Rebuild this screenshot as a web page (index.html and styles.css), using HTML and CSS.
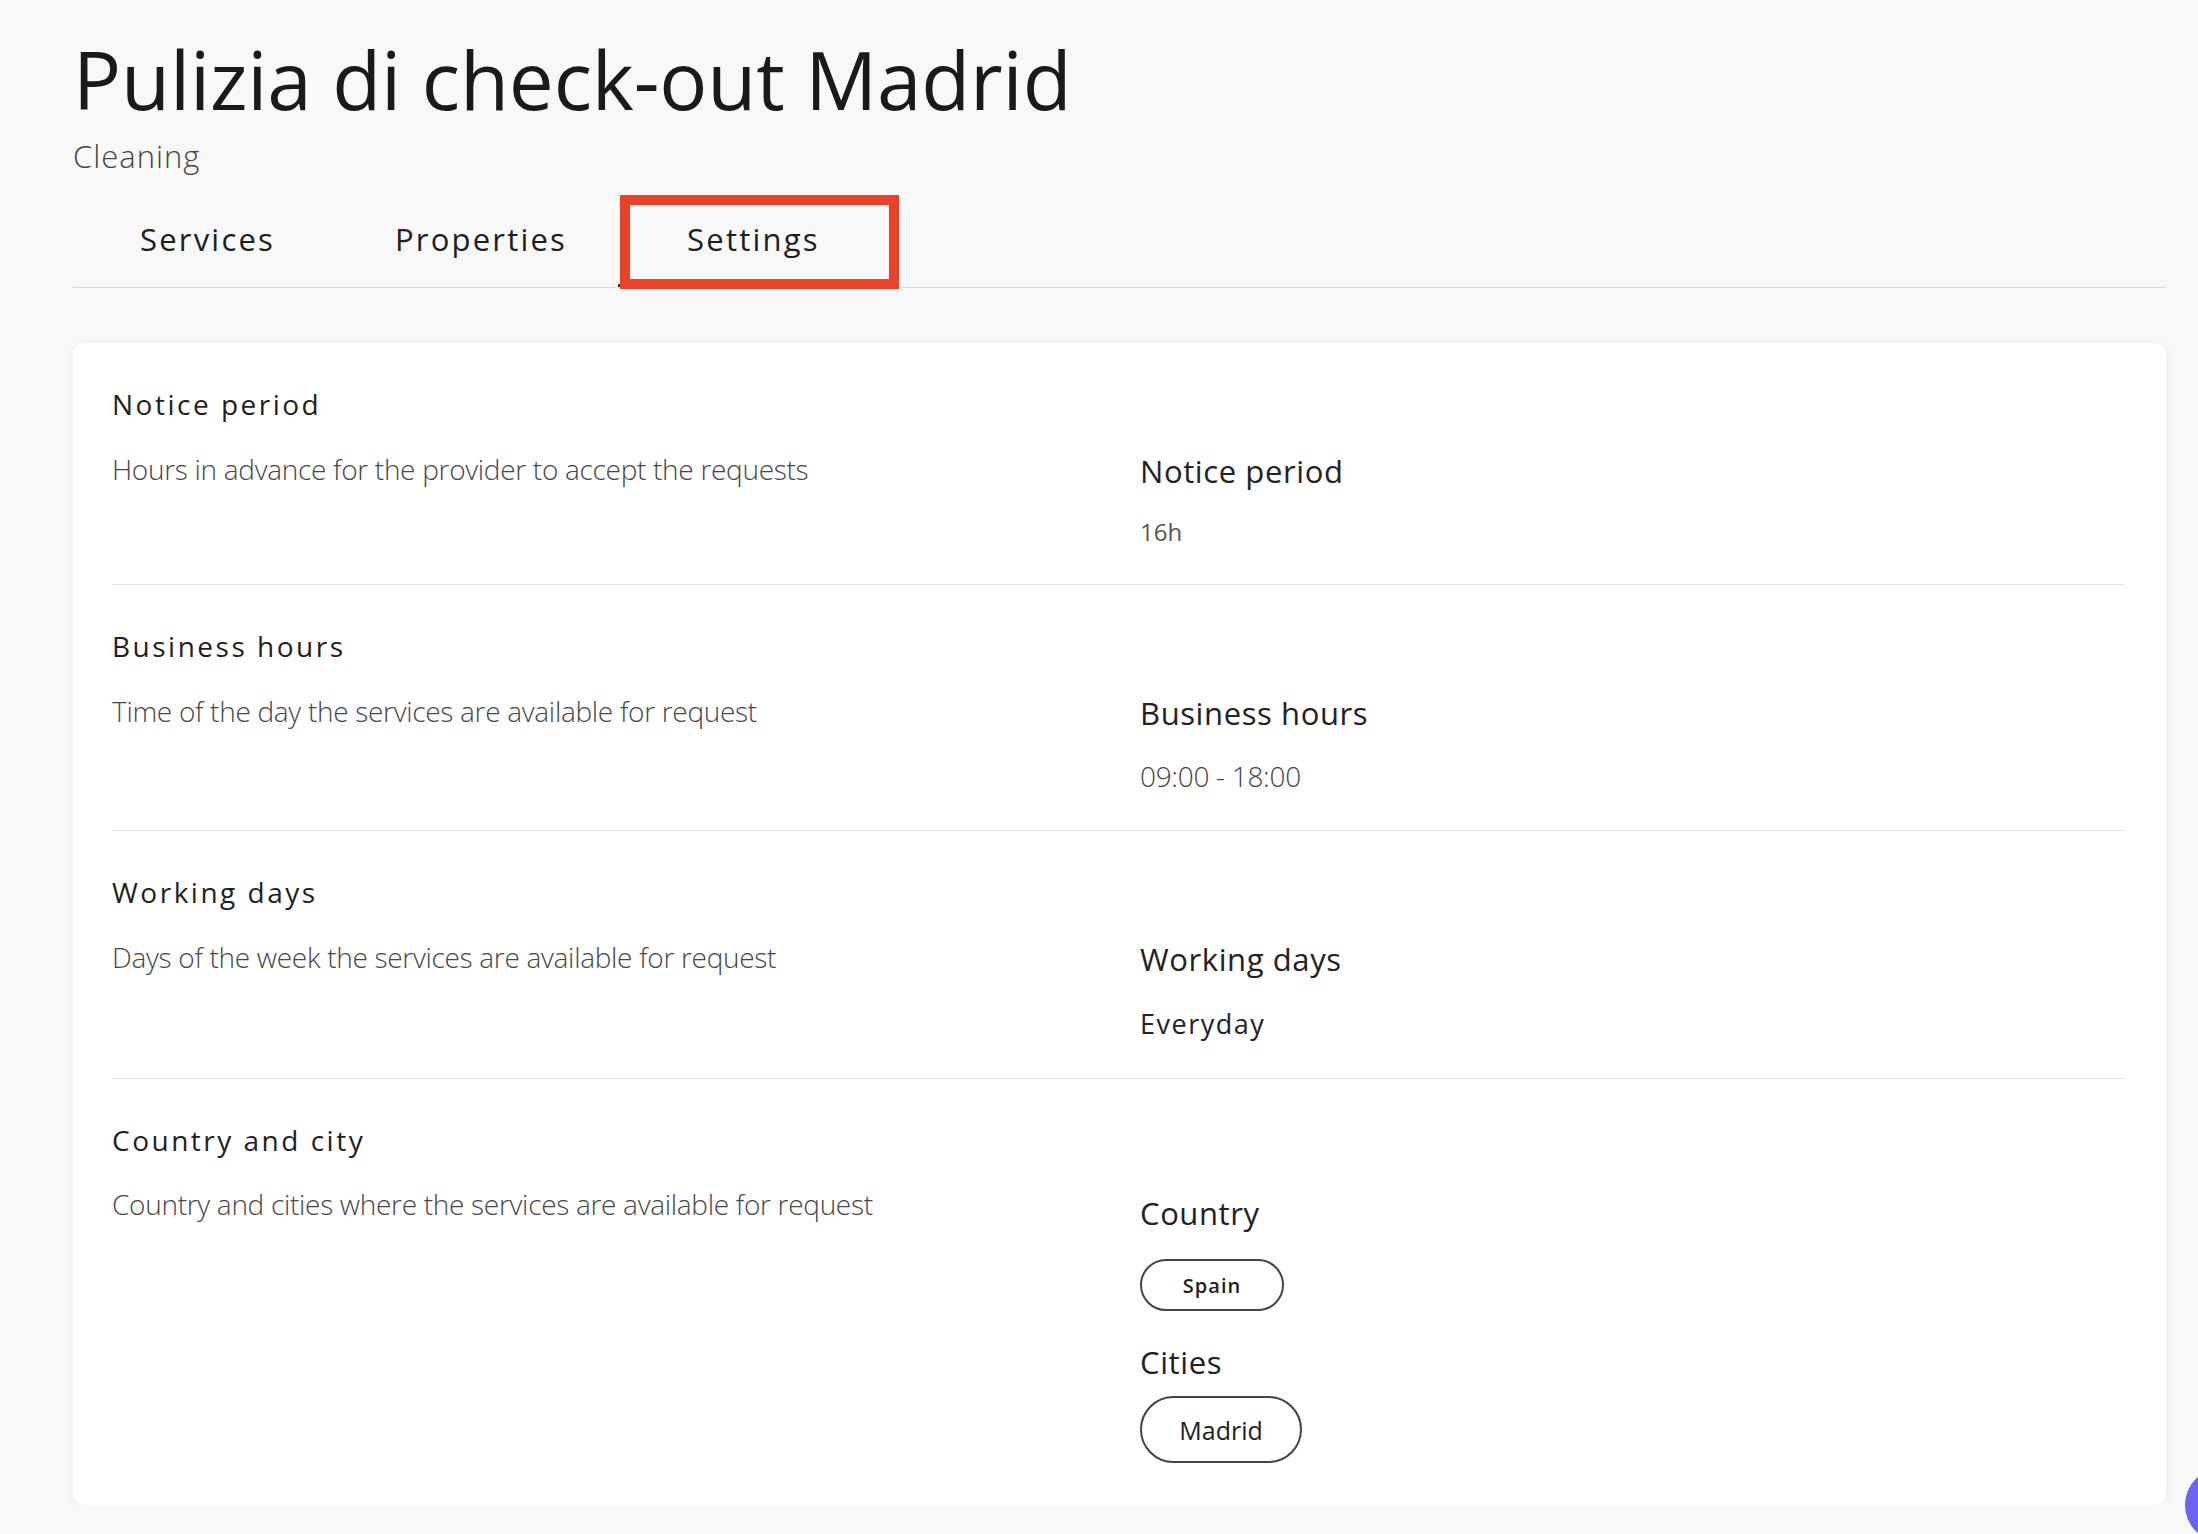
FILE: index.html
```html
<!DOCTYPE html>
<html lang="en">
<head>
<meta charset="utf-8">
<title>Pulizia di check-out Madrid</title>
<link rel="stylesheet" href="styles.css">
</head>
<body>
<main class="page">
  <header class="page-header">
    <h1 class="title">Pulizia di check-out Madrid</h1>
    <div class="subtitle">Cleaning</div>
  </header>
  <nav class="tabs">
    <a class="tab">Services</a>
    <a class="tab">Properties</a>
    <a class="tab tab-active">Settings<span class="highlight-box"></span></a>
  </nav>
  <section class="card">
    <div class="setting">
      <h2 class="setting-title">Notice period</h2>
      <div class="setting-row">
        <p class="setting-desc">Hours in advance for the provider to accept the requests</p>
        <div class="setting-values">
          <div class="value-label">Notice period</div>
          <div class="value-small">16h</div>
        </div>
      </div>
    </div>
    <div class="setting">
      <h2 class="setting-title">Business hours</h2>
      <div class="setting-row">
        <p class="setting-desc">Time of the day the services are available for request</p>
        <div class="setting-values">
          <div class="value-label">Business hours</div>
          <div class="value-hours">09:00 - 18:00</div>
        </div>
      </div>
    </div>
    <div class="setting">
      <h2 class="setting-title">Working days</h2>
      <div class="setting-row">
        <p class="setting-desc">Days of the week the services are available for request</p>
        <div class="setting-values">
          <div class="value-label">Working days</div>
          <div class="value-days">Everyday</div>
        </div>
      </div>
    </div>
    <div class="setting setting-last">
      <h2 class="setting-title">Country and city</h2>
      <div class="setting-row">
        <p class="setting-desc">Country and cities where the services are available for request</p>
        <div class="setting-values values-location">
          <div class="value-label">Country</div>
          <div class="chips"><span class="chip chip-country">Spain</span></div>
          <div class="value-label label-cities">Cities</div>
          <div class="chips chips-city"><span class="chip chip-city">Madrid</span></div>
        </div>
      </div>
    </div>
  </section>
</main>
<div class="chat-bubble"></div>
</body>
</html>
```

FILE: styles.css
```css
* { box-sizing: border-box; }

html, body {
  margin: 0;
  padding: 0;
  background: #f8f8f8;
}

body {
  font-family: "Open Sans", "Noto Sans", "Liberation Sans", sans-serif;
  color: #1e1e1e;
  overflow: hidden;
}

.page {
  padding: 31px 32px 0 73px;
}

.title {
  margin: 0;
  font-size: 80px;
  line-height: 1.2;
  font-weight: 400;
  color: #1a1a1a;
  letter-spacing: -0.15px;
}

.subtitle {
  margin-top: 11px;
  font-size: 31px;
  line-height: 1.2;
  font-weight: 300;
  letter-spacing: 1px;
  color: #454545;
}

.tabs {
  margin-top: 21px;
  display: flex;
  padding-left: 7px;
  border-bottom: 1px solid #dcdcdc;
}

.tab {
  position: relative;
  padding: 25px 60px 29px;
  font-size: 31px;
  line-height: 1.2;
  letter-spacing: 2.2px;
  color: #1e1e1e;
}

.tab-active::after {
  content: "";
  position: absolute;
  left: -9px;
  right: 0;
  bottom: 0;
  height: 3px;
  background: #333;
}

.highlight-box {
  position: absolute;
  left: -7px;
  top: -1px;
  width: 279px;
  height: 94px;
  border: 10px solid #ea4129;
  z-index: 2;
}

.card {
  margin-top: 55px;
  background: #ffffff;
  border-radius: 12px;
  box-shadow: 0 2px 14px rgba(0, 0, 0, 0.06);
  padding: 0 41px 0 39px;
}

.setting {
  padding: 45px 0 37px;
  border-bottom: 1px solid #e2e2e2;
}

.setting-last {
  border-bottom: none;
  padding-bottom: 42px;
}

.setting-title {
  margin: 0;
  font-size: 28px;
  line-height: 1.2;
  font-weight: 400;
  letter-spacing: 2.5px;
  color: #1f1f1f;
}

.setting-row {
  margin-top: 31px;
  display: grid;
  grid-template-columns: 1028px 1fr;
  align-items: start;
}

.setting-desc {
  margin: 0;
  font-size: 28px;
  line-height: 1.2;
  font-weight: 300;
  letter-spacing: -0.3px;
  color: #474747;
}

.value-label {
  font-size: 31px;
  line-height: 1.2;
  font-weight: 400;
  letter-spacing: 0.6px;
  color: #222;
}

.value-small {
  margin-top: 28px;
  font-size: 24px;
  line-height: 1.2;
  font-weight: 400;
  color: #555;
}

.value-hours {
  margin-top: 28px;
  font-size: 28px;
  line-height: 1.2;
  font-weight: 300;
  letter-spacing: -0.3px;
  color: #444;
}

.value-days {
  margin-top: 30px;
  font-size: 27px;
  line-height: 1.2;
  font-weight: 400;
  letter-spacing: 1.5px;
  color: #222;
}

.values-location {
  padding-top: 7px;
}

.chips {
  margin-top: 27px;
  display: flex;
}

.chip {
  display: inline-flex;
  align-items: center;
  justify-content: center;
  border: 2px solid #444;
  border-radius: 999px;
  color: #1e1e1e;
}

.chip-country {
  width: 144px;
  height: 52px;
  font-size: 20px;
  font-weight: 600;
  letter-spacing: 1px;
}

.label-cities {
  margin-top: 33px;
}

.chips-city {
  margin-top: 15px;
}

.chip-city {
  width: 162px;
  height: 67px;
  font-size: 25px;
  font-weight: 400;
}

.chat-bubble {
  position: fixed;
  left: 2185px;
  top: 1468px;
  width: 74px;
  height: 74px;
  border-radius: 50%;
  background: #6a63f4;
}
```
